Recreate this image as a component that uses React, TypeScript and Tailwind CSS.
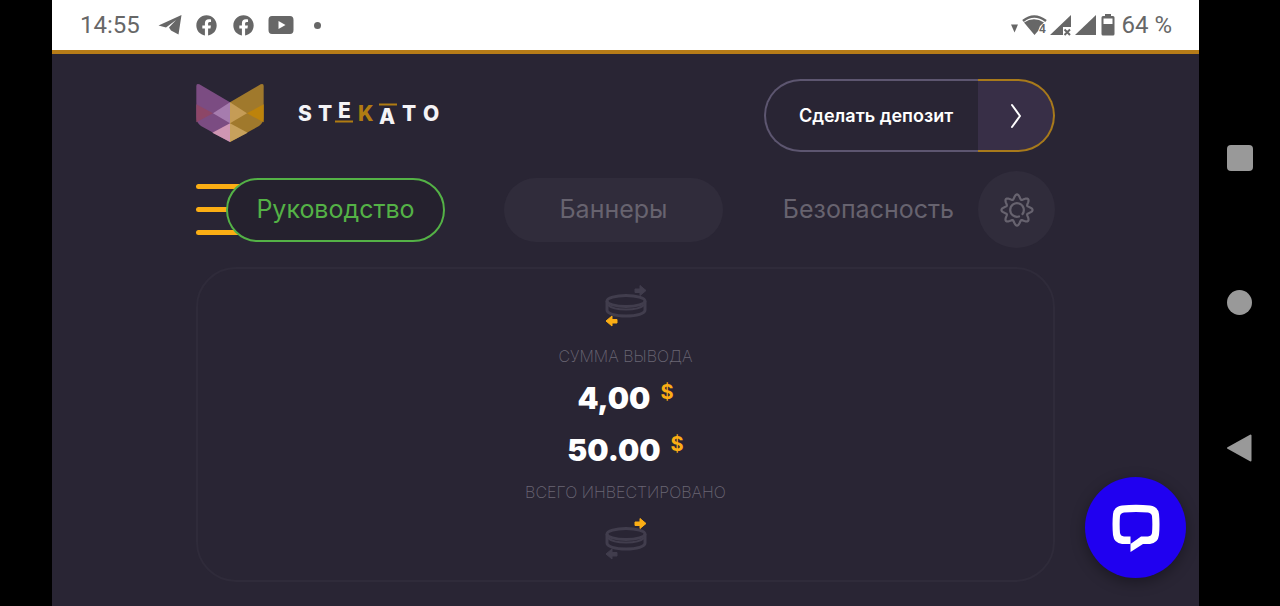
import { FaFacebook } from "react-icons/fa";

const gearPath =
  Array.from({ length: 96 }, (_, i) => {
    const angle = (i / 96) * Math.PI * 2;
    const wave = Math.cos(angle * 8);
    const radius = 13.3 + 2.3 * wave;
    const x = 17 + radius * Math.sin(angle);
    const y = 17 - radius * Math.cos(angle);
    return `${i === 0 ? "M" : "L"}${x.toFixed(2)} ${y.toFixed(2)}`;
  }).join("") + "Z";

const GearIcon = () => (
  <svg
    className="h-[34px] w-[34px]"
    viewBox="0 0 34 34"
    fill="none"
    stroke="#67636f"
    strokeWidth="2.2"
    strokeLinejoin="round"
    strokeLinecap="round"
  >
    <path d={gearPath} />
    <path d="M22.5 21A6.800 6.800 0 1 0 19 23.500" />
  </svg>
);

const LogoMark = () => (
  <svg className="h-[60px] w-[68px]" viewBox="49 40 204 178">
    <path d="M50 48Q50 39 59 43L151 97V216L64 168Q50 158 50 140Z" fill="#7b4c82" />
    <path d="M252 48Q252 39 243 43L151 97V216L238 168Q252 158 252 140Z" fill="#a0792c" />
    <path d="M50 103L100 130L50 157Z" fill="#8d4667" />
    <path d="M252 103L202 130L252 157Z" fill="#bd830b" />
    <path d="M151 97L100 130L151 160Z" fill="#a67cae" />
    <path d="M151 97L202 130L151 160Z" fill="#c59c56" />
    <path d="M151 160L98 188L151 216Z" fill="#cf96b3" />
    <path d="M151 160L204 188L151 216Z" fill="#c7a15c" />
  </svg>
);

const LogoWord = () => (
  <svg
    className="h-[30px] w-[144px] font-['Inter',sans-serif] text-[21px] font-extrabold"
    viewBox="0 0 144 30"
    fill="#f4f3f6"
  >
    <text x="0" y="23">S</text>
    <text x="20" y="23">T</text>
    <text x="40" y="20">E</text>
    <text x="60" y="23" fill="#b07c12">K</text>
    <text x="81" y="26">A</text>
    <text x="104" y="23">T</text>
    <text x="125" y="23">O</text>
    <path d="M37 23.500H55M81 6.500H99" stroke="#b07c12" strokeWidth="2" />
  </svg>
);

const CoinIcon = ({ direction }: { direction: "in" | "out" }) => (
  <svg className="h-[42px] w-[42px]" viewBox="0 0 42 42" fill="none">
    <g stroke="#413d4d" strokeWidth="3">
      <ellipse cx="21" cy="16" rx="19" ry="5.5" />
      <path d="M2 16V25C2 28.500 10 31 21 31S40 28.500 40 25V16" />
      <path d="M3 20C6 23 12 24.500 21 24.500S36 23 39 20" strokeWidth="2" />
    </g>
    <path
      d="M30 4H35V.5L41 5.500L35 10.500V7.500H30Z"
      fill={direction === "in" ? "#fbae14" : "#413d4d"}
      stroke={direction === "in" ? "#fbae14" : "#413d4d"}
      strokeLinejoin="round"
    />
    <path
      d="M12 34.500H7V31L1 36L7 41V38H12Z"
      fill={direction === "out" ? "#fbae14" : "#413d4d"}
      stroke={direction === "out" ? "#fbae14" : "#413d4d"}
      strokeLinejoin="round"
    />
  </svg>
);

const StatusBar = () => (
  <div className="flex h-[54px] items-center justify-between border-b-4 border-[#b67c18] bg-white pr-[27px] pl-7 font-['Roboto',sans-serif] text-2xl text-[#676767]">
    <div className="flex items-center">
      <span className="w-[78px]">14:55</span>
      <svg className="mr-3.5 h-[22px] w-6" viewBox="0 0 24 22" fill="currentColor">
        <path d="M.5 11.500L23.500 1L20.500 20.500L13 16.500L11 13.500L18 6L8 13.500Z" />
      </svg>
      <FaFacebook className="mr-4 h-[21px] w-[21px]" />
      <FaFacebook className="mr-3.5 h-[21px] w-[21px]" />
      <svg className="mr-5 h-5 w-[26px]" viewBox="0 0 26 20">
        <path
          fillRule="evenodd"
          d="M4 1H22Q25.500 1 25.500 5V15Q25.500 19 22 19H4Q.5 19 .5 15V5Q.5 1 4 1ZM10.500 6V14L17.500 10Z"
          fill="currentColor"
        />
      </svg>
      <span className="h-[7px] w-[7px] rounded-full bg-[#676767]" />
    </div>
    <div className="flex items-center">
      <svg className="h-6 w-[104px]" viewBox="0 0 104 24" fill="currentColor">
        <path d="M0 11.500H7L3.500 19.500Z" />
        <path d="M12 8Q23 -1 35 8" fill="none" stroke="currentColor" strokeWidth="2.500" />
        <path d="M13 9.500Q23 3 33 9.500L29 13L27 18L23.500 22Z" />
        <text x="28" y="19.500" fontSize="12" fontWeight="600">4</text>
        <path d="M60 2V14H52V22H39Z" />
        <path d="M53.500 16.500L59 22M59 16.500L53.500 22" stroke="currentColor" strokeWidth="2" />
        <path d="M85 2V22H64Z" />
        <path
          fillRule="evenodd"
          d="M94 1H100V3H102Q103.500 3 103.500 4.500V21Q103.500 22.500 102 22.500H92Q90.500 22.500 90.500 21V4.500Q90.500 3 92 3H94ZM92.500 5.500V11H101.500V5.500Z"
        />
      </svg>
      <span className="ml-1.5">64 %</span>
    </div>
  </div>
);

const Amount = ({ value }: { value: string }) => (
  <p className="flex items-start justify-center gap-2.5 text-[30px] leading-8 font-black text-white">
    {value}
    <span className="text-xl leading-5 font-bold text-[#fbae14]">$</span>
  </p>
);

const SystemNav = () => (
  <nav className="flex w-[81px] shrink-0 flex-col items-center gap-[119px] bg-black pt-[145px]">
    <button aria-label="Recent apps" className="h-[26px] w-[26px] rounded-sm bg-[#999999]" />
    <button aria-label="Home" className="h-[25px] w-[25px] rounded-full bg-[#999999]" />
    <button aria-label="Back">
      <svg className="h-7 w-[26px]" viewBox="0 0 26 28">
        <path
          d="M1 14L23.500 1.500V26.500Z"
          fill="#999999"
          stroke="#999999"
          strokeWidth="2"
          strokeLinejoin="round"
        />
      </svg>
    </button>
  </nav>
);

export default function App() {
  return (
    <div className="flex min-h-screen bg-black pl-[52px] font-['Inter',sans-serif]">
      <div className="relative min-w-0 flex-1 bg-[#292534]">
        <StatusBar />
        <main className="mx-auto max-w-[859px] pt-[25px] pb-6">
          <header className="flex items-center justify-between">
            <a href="#" aria-label="Stekato" className="flex items-center gap-[34px] pb-1.5">
              <LogoMark />
              <LogoWord />
            </a>
            <button className="flex h-[73px] w-[291px] text-lg font-semibold text-white">
              <span className="flex h-full flex-1 items-center justify-center rounded-l-full border-2 border-r-0 border-[#5d5670] pl-2">
                Сделать депозит
              </span>
              <span className="flex h-full w-[77px] items-center justify-center rounded-r-full border-2 border-l-0 border-[#a87a1b] bg-[#382f47]">
                <svg
                  className="h-[26px] w-3"
                  viewBox="0 0 12 26"
                  fill="none"
                  stroke="white"
                  strokeWidth="2"
                  strokeLinecap="round"
                  strokeLinejoin="round"
                >
                  <path d="M2 2L10 13L2 24" />
                </svg>
              </span>
            </button>
          </header>

          <nav className="mt-[19px] flex h-[77px] items-center text-[25px] text-[#67636f]">
            <button aria-label="Меню" className="flex w-12 flex-col gap-[18px]">
              <span className="h-[5px] rounded-full bg-[#fbae14]" />
              <span className="h-[5px] rounded-full bg-[#fbae14]" />
              <span className="h-[5px] rounded-full bg-[#fbae14]" />
            </button>
            <a
              href="#"
              className="relative -ml-[18px] flex h-16 w-[219px] items-center justify-center rounded-full border-2 border-[#54b246] bg-[#25212e] text-[#54b246]"
            >
              Руководство
            </a>
            <a
              href="#"
              className="ml-[59px] flex h-16 w-[219px] items-center justify-center rounded-full bg-[#302c3b]"
            >
              Баннеры
            </a>
            <a href="#" className="ml-auto">
              Безопасность
            </a>
            <button
              aria-label="Настройки"
              className="ml-6 flex h-[77px] w-[77px] items-center justify-center rounded-full bg-[#302c3b]"
            >
              <GearIcon />
            </button>
          </nav>

          <section className="mt-[19px] flex flex-col items-center rounded-[40px] border-2 border-[#2f2b3a] pt-4 pb-5">
            <CoinIcon direction="out" />
            <h2 className="mt-[19px] text-base leading-5 font-extralight text-[#6b6775]">СУММА ВЫВОДА</h2>
            <div className="my-4 flex flex-col gap-5">
              <Amount value="4,00" />
              <Amount value="50.00" />
            </div>
            <h2 className="text-base leading-5 font-extralight text-[#6b6775]">ВСЕГО ИНВЕСТИРОВАНО</h2>
            <div className="mt-4">
              <CoinIcon direction="in" />
            </div>
          </section>
        </main>

        <button
          aria-label="Чат"
          className="absolute right-[13px] bottom-7 flex h-[101px] w-[101px] items-center justify-center rounded-full bg-[#2000f0] shadow-[0_4px_14px_rgba(0,0,0,0.35)]"
        >
          <svg className="h-12 w-12" viewBox="0 0 48 48">
            <path
              fillRule="evenodd"
              d="M10 1.500Q24 0 38 1.500Q46 2.500 47 10Q48 20 47 31Q46 39 38 40H31L18.500 48V40H10Q2 39 1 31Q0 20 1 10Q2 2.500 10 1.500ZM12 8.500Q8.500 9 8 12Q7.300 20 8 29Q8.500 32 12 32.500H18.500V40L29 32.500H36Q39.500 32 40 29Q40.700 20 40 12Q39.500 9 36 8.500Q24 7.500 12 8.500Z"
              fill="white"
            />
          </svg>
        </button>
      </div>
      <SystemNav />
    </div>
  );
}
